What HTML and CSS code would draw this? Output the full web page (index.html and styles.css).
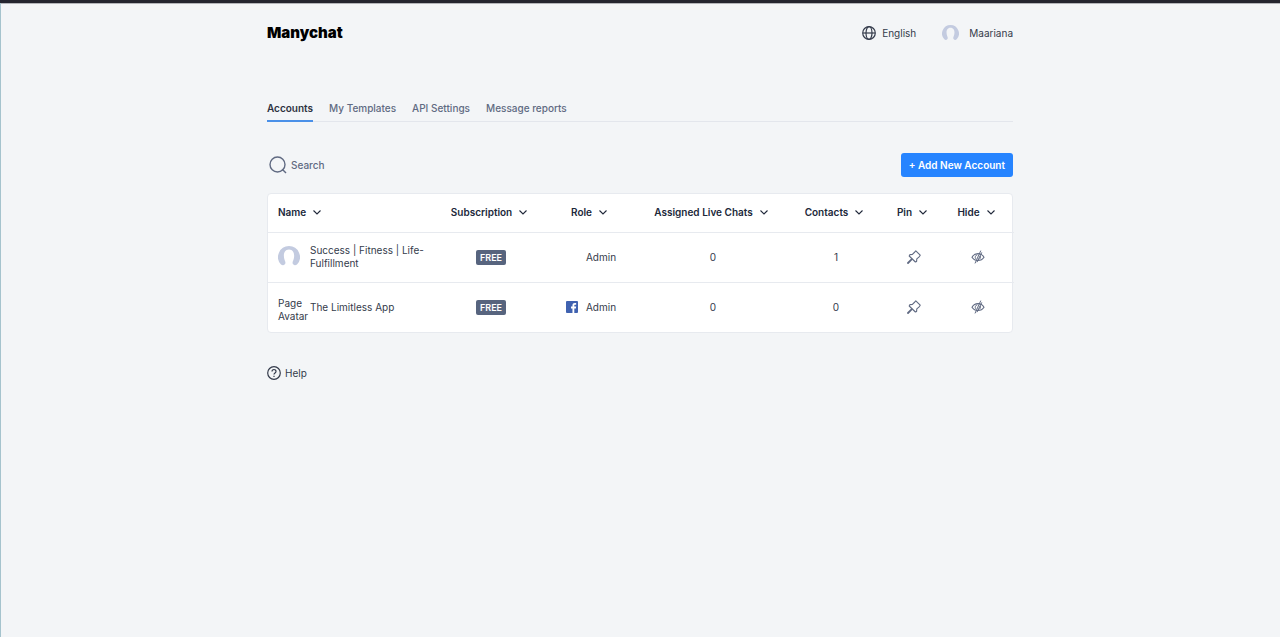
FILE: index.html
```html
<!DOCTYPE html>
<html lang="en">

<head>
    <meta charset="UTF-8">
    <meta name="viewport" content="width=device-width, initial-scale=1.0">
    <title>Manychat - Accounts</title>
    <link rel="stylesheet" href="styles.css">
</head>

<body>
    <!-- shared icons -->
    <svg class="hidden">
        <symbol id="chevron" viewBox="0 0 8 8">
            <path d="M0.5 1.500 4 5 7.500 1.500" fill="none" stroke="currentColor" stroke-width="1.100" />
        </symbol>
        <symbol id="avatar" viewBox="0 0 22 22">
            <path d="M11 0A11 11 0 0 0 3 18.500c1.600 1.300 3 .9 4-.4 .9-1.300.3-2.500-.3-3.900C5.200 10.800 5.200 3.500 11 3.500s5.800 7.300 4.300 10.700c-.6 1.400-1.200 2.600-.3 3.900 1 1.300 2.400 1.700 4 .4A11 11 0 0 0 11 0z" fill="#c3cbe0" />
        </symbol>
        <symbol id="pin" viewBox="0 0 14 14">
            <path d="M8.800.8 13.200 5.200 12.400 6.600 9.800 8.800 9.600 11.400 8.400 12 2.200 6 3 4.600 5.400 4.400 7.800 2z" fill="none" stroke="currentColor" stroke-width="1.100" stroke-linejoin="round" />
            <path d="M4.600 9.400 1 13" fill="none" stroke="currentColor" stroke-width="1.800" stroke-linecap="round" />
        </symbol>
        <symbol id="hide" viewBox="0 0 14 14">
            <path d="M1 7.200C3.800 2.400 10.200 2.400 13 7.200 10.200 11.600 3.800 11.600 1 7.200z" fill="none" stroke="currentColor" stroke-width="1.100" />
            <path d="M6.400 4.800a2.500 2.500 0 0 0-1.600 4M9.200 6a2.500 2.500 0 0 1-2 3.600M9.800.6 4 13.400M10.800 2.400 6 12.200" fill="none" stroke="currentColor" />
        </symbol>
    </svg>

    <div class="page">
        <header class="header">
            <a class="logo" href="#">Manychat</a>
            <div class="header-menu">
                <button class="menu-btn language" type="button">
                    <svg class="icon-globe" viewBox="0 0 14 14" fill="none" stroke="currentColor" stroke-width="1.200">
                        <circle cx="7" cy="7" r="6.300" />
                        <ellipse cx="7" cy="7" rx="3" ry="6.300" />
                        <path d="M1 7h12" />
                    </svg>
                    English
                </button>
                <button class="menu-btn user" type="button">
                    <svg class="avatar-small"><use href="#avatar" /></svg>
                    Maariana
                </button>
            </div>
        </header>

        <nav class="tabs">
            <a class="tab active" href="#">Accounts</a>
            <a class="tab" href="#">My Templates</a>
            <a class="tab" href="#">API Settings</a>
            <a class="tab" href="#">Message reports</a>
        </nav>

        <div class="toolbar">
            <label class="search">
                <svg class="icon-search" viewBox="0 0 18 18" fill="none" stroke="currentColor" stroke-width="1.400">
                    <circle cx="8.500" cy="8.500" r="7.500" />
                    <path d="M13.200 13.200 17 17" />
                </svg>
                <input class="search-input" type="search" placeholder="Search" aria-label="Search">
            </label>
            <button class="btn-add" type="button">+ Add New Account</button>
        </div>

        <div class="card">
            <table class="accounts">
                <colgroup>
                    <col class="col-name">
                    <col class="col-subscription">
                    <col class="col-role">
                    <col class="col-chats">
                    <col class="col-contacts">
                    <col class="col-pin">
                    <col class="col-hide">
                </colgroup>
                <thead>
                    <tr>
                        <th><button class="sort" type="button">Name <svg class="chevron"><use href="#chevron" /></svg></button></th>
                        <th><button class="sort" type="button">Subscription <svg class="chevron"><use href="#chevron" /></svg></button></th>
                        <th><button class="sort" type="button">Role <svg class="chevron"><use href="#chevron" /></svg></button></th>
                        <th><button class="sort" type="button">Assigned Live Chats <svg class="chevron"><use href="#chevron" /></svg></button></th>
                        <th><button class="sort" type="button">Contacts <svg class="chevron"><use href="#chevron" /></svg></button></th>
                        <th><button class="sort" type="button">Pin <svg class="chevron"><use href="#chevron" /></svg></button></th>
                        <th><button class="sort" type="button">Hide <svg class="chevron"><use href="#chevron" /></svg></button></th>
                    </tr>
                </thead>
                <tbody>
                    <tr>
                        <td>
                            <div class="account">
                                <div class="account-avatar"><svg class="avatar"><use href="#avatar" /></svg></div>
                                <a class="account-name" href="#">Success | Fitness | Life-Fulfillment</a>
                            </div>
                        </td>
                        <td><span class="badge">FREE</span></td>
                        <td>
                            <div class="role">
                                <span class="channel"></span>
                                Admin
                            </div>
                        </td>
                        <td>0</td>
                        <td>1</td>
                        <td><button class="icon-btn" type="button" aria-label="Pin"><svg class="icon"><use href="#pin" /></svg></button></td>
                        <td><button class="icon-btn" type="button" aria-label="Hide"><svg class="icon"><use href="#hide" /></svg></button></td>
                    </tr>
                    <tr>
                        <td>
                            <div class="account">
                                <div class="account-avatar avatar-text">Page Avatar</div>
                                <a class="account-name" href="#">The Limitless App</a>
                            </div>
                        </td>
                        <td><span class="badge">FREE</span></td>
                        <td>
                            <div class="role">
                                <svg class="channel" viewBox="0 0 13 13">
                                    <rect width="13" height="13" rx="1" fill="#4062b0" />
                                    <path d="M7 13V8H5.400V6H7V4.800C7 3 8 2.200 9.600 2.200h1.400V4H10C9.200 4 9 4.300 9 5v1h2l-.3 2H9v5z" fill="#fff" />
                                </svg>
                                Admin
                            </div>
                        </td>
                        <td>0</td>
                        <td>0</td>
                        <td><button class="icon-btn" type="button" aria-label="Pin"><svg class="icon"><use href="#pin" /></svg></button></td>
                        <td><button class="icon-btn" type="button" aria-label="Hide"><svg class="icon"><use href="#hide" /></svg></button></td>
                    </tr>
                </tbody>
            </table>
        </div>

        <a class="help" href="#">
            <svg class="icon-help" viewBox="0 0 14 14" fill="none" stroke="currentColor" stroke-width="1.200">
                <circle cx="7" cy="7" r="6.300" />
                <path d="M5 5.600C5 2.800 9 2.900 9 5.400 9 7 7 6.900 7 8.600M7 9.800v1.200" />
            </svg>
            Help
        </a>
    </div>
</body>

</html>
```

FILE: styles.css
```css
* {
    box-sizing: border-box;
    margin: 0;
    padding: 0;
}

body {
    min-height: 100vh;
    background-color: #f3f5f7;
    border-top: 3px solid #25252f;
    box-shadow: inset 1px 0 #a5c3cd, inset 0 1px #b4b5ba;
    font-family: Inter, "Liberation Sans", sans-serif;
    font-size: 10px;
    line-height: 13px;
    color: #343b4b;
}

a {
    color: inherit;
    text-decoration: none;
}

button {
    border: none;
    background: none;
    font: inherit;
    color: inherit;
    cursor: pointer;
}

svg {
    display: block;
    flex-shrink: 0;
}

.hidden {
    display: none;
}

.page {
    max-width: 746px;
    margin: 0 auto;
}

/* HEADER */
.header {
    display: flex;
    justify-content: space-between;
    align-items: center;
    height: 60px;
}

.logo {
    font-size: 15px;
    font-weight: 900;
    line-height: 20px;
    color: #000;
}

.header-menu {
    display: flex;
    gap: 26px;
}

.menu-btn {
    display: flex;
    align-items: center;
    gap: 6px;
}

.user {
    gap: 10px;
}

.icon-globe,
.icon-help {
    width: 14px;
    height: 14px;
}

.avatar-small {
    width: 17px;
    height: 17px;
}

.avatar-small use,
.avatar use {
    width: 100%;
    height: 100%;
}

/* TABS */
.tabs {
    display: flex;
    gap: 16px;
    margin-top: 33px;
    border-bottom: 1px solid #e3e6ec;
}

.tab {
    padding: 6px 0 5px;
    margin-bottom: -1px;
    border-bottom: 2px solid transparent;
    font-weight: 500;
    color: #606a82;
}

.tab.active {
    border-color: #4a90e8;
    font-weight: 600;
    color: #2d3240;
}

/* TOOLBAR */
.toolbar {
    display: flex;
    justify-content: space-between;
    align-items: center;
    margin: 31px 0 16px;
}

.search {
    display: flex;
    align-items: center;
    gap: 4px;
    padding-left: 2px;
    color: #606a82;
}

.icon-search {
    width: 18px;
    height: 18px;
}

.search-input {
    border: none;
    outline: none;
    background: none;
    font: inherit;
    font-weight: 500;
    color: inherit;
}

.search-input::placeholder {
    color: #606a82;
}

.btn-add {
    height: 24px;
    padding: 0 8px;
    border-radius: 3px;
    background-color: #2684ff;
    font-weight: 600;
    color: #fff;
}

/* TABLE */
.card {
    border: 1px solid #e7eaef;
    border-radius: 4px;
    background-color: #fff;
}

.accounts {
    width: 100%;
    table-layout: fixed;
    border-collapse: collapse;
    text-align: center;
}

.col-name {
    width: 172px;
}

.col-subscription {
    width: 102px;
}

.col-role {
    width: 98px;
}

.col-chats {
    width: 146px;
}

.col-contacts {
    width: 100px;
}

.col-pin {
    width: 56px;
}

.col-hide {
    width: 72px;
}

th {
    height: 38px;
    padding-right: 4px;
    font-weight: 600;
    color: #20283a;
}

td {
    height: 50px;
    border-top: 1px solid #e7eaef;
}

th:first-child,
td:first-child {
    padding-left: 10px;
    text-align: left;
}

.sort {
    display: inline-flex;
    align-items: center;
    gap: 7px;
    white-space: nowrap;
}

.chevron {
    width: 8px;
    height: 8px;
}

.account {
    display: flex;
    align-items: center;
}

.account-avatar {
    width: 32px;
    flex-shrink: 0;
}

/* shown when the page has no picture */
.avatar-text {
    padding-top: 6px;
}

.avatar {
    width: 22px;
    height: 22px;
}

.account-name {
    max-width: 120px;
}

.badge {
    display: inline-block;
    padding: 1px 4px;
    border-radius: 2px;
    background-color: #57647e;
    font-size: 9px;
    font-weight: 600;
    color: #fff;
}

.role {
    display: flex;
    justify-content: center;
    align-items: center;
    gap: 8px;
}

.channel {
    width: 12px;
    height: 12px;
}

.icon-btn {
    vertical-align: middle;
    color: #606a82;
}

.icon {
    width: 14px;
    height: 14px;
}

/* HELP */
.help {
    display: inline-flex;
    align-items: center;
    gap: 4px;
    margin-top: 33px;
}
```
